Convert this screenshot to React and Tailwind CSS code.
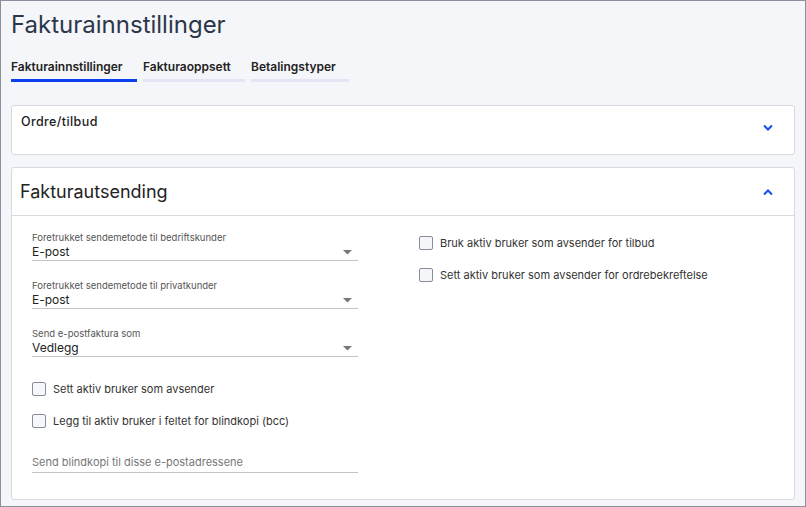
import React from 'react';

const SelectField = ({ label, value }) => (
  <div className="w-[326px]">
    <div className="text-[9.5px] leading-[12px] text-[#555]">{label}</div>
    <div className="flex items-center justify-between h-[17px] border-b border-[#c4c4c4]">
      <span className="text-[12px] text-[#222]">{value}</span>
      <svg width="9" height="5" viewBox="0 0 9 5" className="mr-[6px]">
        <path d="M0 0h9L4.5 4.5z" fill="#777" />
      </svg>
    </div>
  </div>
);

const Checkbox = ({ label }) => (
  <label className="flex items-center gap-[7px] text-[11px] leading-[16px] text-[#333]">
    <span className="w-[14px] h-[14px] rounded-[2px] border border-[#888c96] bg-[#f6f7fb]" />
    {label}
  </label>
);

const Chevron = ({ up }) => (
  <svg width="12" height="8" viewBox="0 0 12 8" className="text-[#1a47f5]">
    <path d={up ? 'M2 6.5l4-4 4 4' : 'M2 1.5l4 4 4-4'} fill="none" stroke="currentColor" strokeWidth="2" />
  </svg>
);

export default function App() {
  const tabs = [
    { name: 'Fakturainnstillinger', w: 'w-[126px]', active: true },
    { name: 'Fakturaoppsett', w: 'w-[102px]' },
    { name: 'Betalingstyper', w: 'w-[98px]' },
  ];

  return (
    <div className="w-[806px] h-[507px] bg-[#f5f6fa] border border-[#8b90a0] font-['Inter',sans-serif] overflow-hidden">
      <div className="px-[10px]">
        <h1 className="pt-[9px] text-[24px] leading-[30px] text-[#2c3649]">Fakturainnstillinger</h1>

        <div className="flex gap-[6px] mt-[19px]">
          {tabs.map((t) => (
            <div key={t.name} className={t.w}>
              <div className="text-[12px] font-semibold text-[#222] leading-[15px] h-[18px]">{t.name}</div>
              <div className={`h-[3px] mt-[2px] ${t.active ? 'bg-[#0b3ff0]' : 'bg-[#e1e5f3]'}`} />
            </div>
          ))}
        </div>

        <div className="mt-[23px] h-[50px] bg-white border border-[#d8dadf] rounded-[3px] flex justify-between pl-[9px] pr-[20px]">
          <div className="pt-[7px] text-[12.5px] tracking-[0.4px] font-medium text-[#222]">Ordre/tilbud</div>
          <div className="pt-[18px]"><Chevron /></div>
        </div>

        <div className="mt-[12px] h-[333px] bg-white border border-[#d8dadf] rounded-[3px]">
          <div className="h-[48px] flex items-center justify-between pl-[8px] pr-[20px] border-b border-[#d8dadf]">
            <span className="text-[18px] text-[#222]">Fakturautsending</span>
            <Chevron up />
          </div>

          <div className="flex pl-[20px] pt-[16px]">
            <div className="w-[387px] flex flex-col">
              <SelectField label="Foretrukket sendemetode til bedriftskunder" value="E-post" />
              <div className="mt-[19px]"><SelectField label="Foretrukket sendemetode til privatkunder" value="E-post" /></div>
              <div className="mt-[19px]"><SelectField label="Send e-postfaktura som" value="Vedlegg" /></div>
              <div className="mt-[24px]"><Checkbox label="Sett aktiv bruker som avsender" /></div>
              <div className="mt-[16px]"><Checkbox label="Legg til aktiv bruker i feltet for blindkopi (bcc)" /></div>
              <div className="mt-[25px] w-[326px] h-[19px] border-b border-[#c4c4c4] text-[11px] text-[#777]">
                Send blindkopi til disse e-postadressene
              </div>
            </div>
            <div className="flex flex-col pt-[3px]">
              <Checkbox label="Bruk aktiv bruker som avsender for tilbud" />
              <div className="mt-[16px]"><Checkbox label="Sett aktiv bruker som avsender for ordrebekreftelse" /></div>
            </div>
          </div>
        </div>
      </div>
    </div>
  );
}
